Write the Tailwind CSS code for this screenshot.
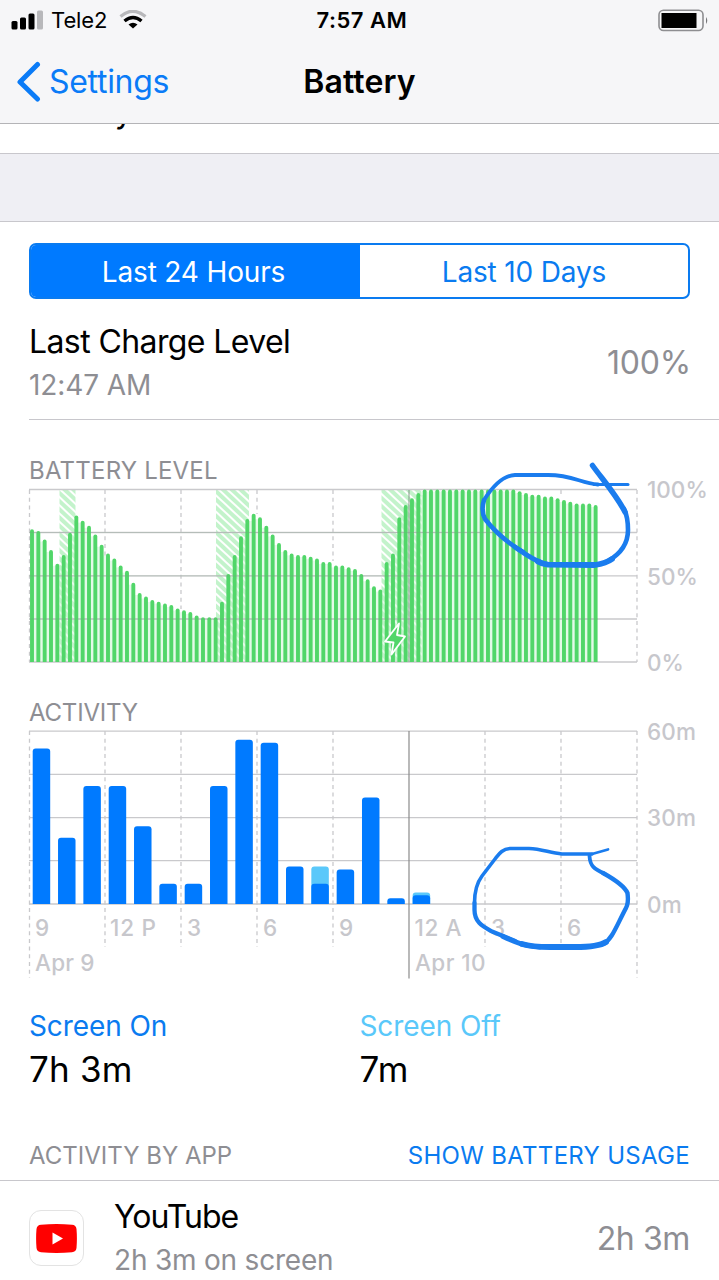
<!DOCTYPE html>
<html lang="en">
<head>
    <meta charset="UTF-8">
    <meta name="viewport" content="width=device-width, initial-scale=1.0">
    <title>Battery</title>
    <script src="https://cdn.jsdelivr.net/npm/@tailwindcss/browser@4"></script>
</head>
<body class="bg-white">
<div class="relative w-[719px] h-[1280px] overflow-hidden bg-white text-black font-['Inter',sans-serif]">

    <!-- Status bar and navigation -->
    <header class="h-[124px] bg-[#f6f6f8] border-b border-[#b4b4b7]">
        <div class="h-10 grid grid-cols-3 items-center pl-[11px] pr-[10px]">
            <div class="flex items-center">
                <svg class="w-8 h-5" viewBox="0 0 32 20">
                    <rect x="0.5" y="11" width="6" height="8.5" rx="1.5"/>
                    <rect x="9" y="7.5" width="6" height="12" rx="1.5"/>
                    <rect x="17.5" y="3.5" width="6" height="16" rx="1.5"/>
                    <rect x="26" y="0.5" width="6" height="19" rx="1.5" fill="#b8b8bb"/>
                </svg>
                <span class="ml-2 text-[22px] tracking-[-0.1px]">Tele2</span>
                <svg class="ml-3 w-7 h-5" viewBox="0 0 28 20" fill="none">
                    <path d="M1.5 6.5 Q13.5 -4 26.5 6.5" stroke="#b8b8bb" stroke-width="3.2"/>
                    <path d="M5.5 11 Q14 4 22.5 11" stroke="#000" stroke-width="3.4"/>
                    <path d="M9.5 14.5 Q14 11 18.5 14.5 L14 18.5 Z" fill="#000"/>
                </svg>
            </div>
            <div class="pl-[4px] text-center text-[22px] font-semibold tracking-[0.5px]">7:57 AM</div>
            <svg class="justify-self-end w-[51px] h-[23px]" viewBox="0 0 51 23" fill="none">
                <rect x="1" y="1.2" width="44" height="20.3" rx="4.5" stroke="#8e8e91" stroke-width="1.6"/>
                <rect x="3.5" y="4" width="35" height="15" fill="#000"/>
                <path d="M48 8 Q50.5 11.5 48 15 Z" fill="#77777a"/>
            </svg>
        </div>
        <div class="h-[83px] grid grid-cols-3 items-center pl-4 pr-4">
            <a href="#" class="flex items-center text-[#0a7bf7]">
                <svg class="w-[25px] h-[42px]" viewBox="0 0 25 42" fill="none" stroke="currentColor" stroke-width="5" stroke-linecap="round" stroke-linejoin="round">
                    <path d="M21.5 3.5 L4 21 L21.5 38"/>
                </svg>
                <span class="ml-2 text-[32px] tracking-[-0.3px]">Settings</span>
            </a>
            <h1 class="text-center text-[32px] font-semibold tracking-[0.1px]">Battery</h1>
        </div>
    </header>

    <!-- Row scrolled under the navigation bar -->
    <div class="h-[29px] overflow-hidden pl-[29px]">
        <div class="-mt-[34px] text-[32px] leading-[44px] tracking-[-0.7px]">Battery Health</div>
    </div>
    <div class="h-[69px] bg-[#efeff4] border-y border-[#c8c7cc]"></div>

    <!-- Segmented control -->
    <div class="mt-[21px] mx-[29px] h-14 flex rounded-[7px] border-2 border-[#0a7bf0] overflow-hidden text-[28px] tracking-[-0.15px]">
        <div class="w-[329px] pt-[2px] pr-[4px] flex items-center justify-center bg-[#007aff] text-white">Last 24 Hours</div>
        <div class="flex-1 pt-[2px] flex items-center justify-center text-[#0a7bf0]">Last 10 Days</div>
    </div>

    <!-- Last charge -->
    <div class="ml-[29px] pr-[28px] h-[121px] flex justify-between items-center border-b border-[#c8c7cc]">
        <div class="pt-[8px]">
            <div class="text-[32px] leading-[44px] tracking-[-0.6px]">Last Charge Level</div>
            <div class="text-[28px] leading-[42px] tracking-[-0.1px] text-[#8e8e93]">12:47 AM</div>
        </div>
        <div class="pt-2 text-[32px] text-[#8e8e93] tracking-[-0.2px]">100%</div>
    </div>

    <!-- Battery level -->
    <h2 class="mt-[35px] ml-[29px] h-[31px] leading-8 text-[24px] tracking-[0.2px] text-[#8e8e93]">BATTERY LEVEL</h2>
    <svg class="block w-[719px] h-[194px] overflow-visible" viewBox="0 486 719 194">
        <defs>
            <pattern id="hatch" width="6" height="6" patternUnits="userSpaceOnUse" patternTransform="rotate(43)">
                <rect width="6" height="4" fill="#c3f3cb"/>
            </pattern>
        </defs>
        <g id="levelFill"></g>
        <g fill="url(#hatch)">
            <rect x="59.5" y="490" width="16" height="172"/>
            <rect x="216" y="490" width="33" height="172"/>
            <rect x="381.5" y="490" width="40" height="172"/>
        </g>
        <g stroke="#c9c9cc" stroke-width="1.3">
            <path d="M29 489.5H637 M29 532.5H637 M29 575.8H637 M29 619H637 M29 662H637"/>
        </g>
        <path id="levelDashes" stroke="#c9c9cc" stroke-width="1.3" stroke-dasharray="4 3.7" d="M29.5 490V662 M105 490V556 M181 490V609 M257 490V514 M333 490V561 M561 490V494 M637 490V662"/>
        <g id="levelBars" fill="#51d669"></g>
        <path d="M29 532.5H598 M29 575.8H598 M29 619H598" stroke="#7a9a80" stroke-opacity="0.25" stroke-width="1.2"/>
        <path d="M409 490V662" stroke="#7b8b7d" stroke-opacity="0.8" stroke-width="1.1"/>
        <path d="M399 623.5 L385 641.5 L393.5 642.5 L391.5 654.5 L405 636.5 L397 635 Z" fill="#51d669" stroke="#fff" stroke-width="1.8" stroke-linejoin="round"/>
        <g font-size="22.5" font-weight="500" fill="#c7c7cc">
            <text x="647" y="498">100%</text>
            <text x="647" y="584.5">50%</text>
            <text x="647" y="670.5">0%</text>
        </g>
    </svg>

    <!-- Activity -->
    <h2 class="mt-[17px] ml-[29px] h-[31px] leading-8 text-[24px] tracking-[-0.2px] text-[#8e8e93]">ACTIVITY</h2>
    <svg class="block w-[719px] h-[254px] overflow-visible" viewBox="0 728 719 254">
        <g stroke="#c9c9cc" stroke-width="1.3">
            <path d="M29 731.2H637 M29 774.4H637 M29 817.6H637 M29 860.7H637 M29 904H637"/>
            <path stroke-dasharray="4 3.7" d="M29.5 731V978 M105 731V947 M181 731V947 M257 731V947 M333 731V947 M485 731V947 M561 731V947 M637 731V978"/>
        </g>
        <path d="M409 731V978.5" stroke="#8b8b8b" stroke-width="1.2"/>
        <g id="activityBars"></g>
        <g font-size="22.5" font-weight="500" fill="#c7c7cc" letter-spacing="0.2">
            <text x="647" y="740">60m</text>
            <text x="647" y="826">30m</text>
            <text x="647" y="912.5">0m</text>
            <text x="35" y="936">9</text>
            <text x="110" y="936" letter-spacing="0.8">12 P</text>
            <text x="187" y="936">3</text>
            <text x="263" y="936">6</text>
            <text x="339" y="936">9</text>
            <text x="414.500" y="936" letter-spacing="0.6">12 A</text>
            <text x="491" y="936">3</text>
            <text x="567" y="936">6</text>
            <text x="35" y="971">Apr 9</text>
            <text x="415" y="971" letter-spacing="0.4">Apr 10</text>
        </g>
    </svg>

    <!-- Totals -->
    <div class="mt-[26px] mx-[29px] grid grid-cols-2">
        <div>
            <div class="text-[28px] leading-9 tracking-[-0.1px] text-[#0a7bf0]">Screen On</div>
            <div class="text-[35px] leading-[50px] tracking-[0.2px]">7h 3m</div>
        </div>
        <div>
            <div class="text-[28px] leading-9 tracking-[-0.1px] text-[#5ac8fa]">Screen Off</div>
            <div class="text-[35px] leading-[50px] tracking-[0.2px]">7m</div>
        </div>
    </div>

    <!-- Activity by app -->
    <div class="mt-[36px] px-[29px] pt-[2px] h-[51px] flex justify-between items-center border-b border-[#c8c7cc] text-[24px]">
        <h2 class="text-[#8e8e93]">ACTIVITY BY APP</h2>
        <a href="#" class="tracking-[0.3px] text-[#0a7bf0]">SHOW BATTERY USAGE</a>
    </div>
    <div class="h-[114px] px-[29px] flex items-center">
        <div class="w-[55px] h-14 flex items-center justify-center rounded-[12px] border border-[#e3e3e3]">
            <svg class="w-[41px] h-[29px]" viewBox="0 0 41 29">
                <path d="M5 .8 Q20.500 -.6 36 .8 Q40 1 40.500 5 Q41.300 14.500 40.500 24 Q40 28 36 28.200 Q20.500 29.600 5 28.200 Q1 28 .5 24 Q-.3 14.500 .5 5 Q1 1 5 .8Z" fill="#f00"/>
                <path d="M16.500 8.500 L27 14.500 L16.500 20.500Z" fill="#fff"/>
            </svg>
        </div>
        <div class="ml-[30px] flex-1">
            <div class="text-[32px] leading-[44px] tracking-[-1px]">YouTube</div>
            <div class="text-[28px] leading-[42px] tracking-[-0.2px] text-[#8e8e93]">2h 3m on screen</div>
        </div>
        <div class="pt-[2px] text-[32px] tracking-[-0.4px] text-[#8e8e93]">2h 3m</div>
    </div>

    <!-- Pen marks -->
    <svg class="absolute inset-0 w-[719px] h-[1280px]" viewBox="0 0 719 1280" fill="none" stroke="#1a7cee" stroke-linecap="round" stroke-linejoin="round">
        <path stroke-width="3" d="M628 484.500 H594"/>
        <path stroke-width="3.800" d="M598 484.500 C580 483 573 475 548 475 H515 C502 475.500 491 489 484 500"/>
        <path stroke-width="4.600" d="M484 500 C481.500 508 483 515 485 519 C495 532 508 543 523 552"/>
        <path stroke-width="5" d="M515 547 C525 554 534 561 546 564.300"/>
        <path stroke-width="5.800" d="M538 561.500 Q542 564 548 564.700 L595 565 C602 564 608 562 612 559"/>
        <path stroke-width="4.600" d="M608 561 C622 553 628 543 628 530 C628 521 627 515 624 509"/>
        <path stroke-width="5.500" d="M592.500 465.500 C603 480 617 496 625 512"/>
        <path stroke-width="2.800" d="M608 849.500 L592 854"/>
        <path stroke-width="3.600" d="M592 854 H562 C550 853 542 849 529 848.500 H510 C502 849 499 854 495 859 L482 876 C476 884 474.500 892 474.500 903"/>
        <path stroke-width="4.300" d="M474.500 903 V910 C474.500 923 484 927 492 931.500 L515 941"/>
        <path stroke-width="5" d="M503 936.500 C517 943 525 946 540 947"/>
        <path stroke-width="5.800" d="M522 944 C530 946.500 538 947 550 947 H575 C590 947 600 946 606 942"/>
        <path stroke-width="4.400" d="M604 943.500 C612 939 616 927 626 908 C629 902 628 899 627.500 893 C624 885 612 878 603 873"/>
        <path stroke-width="3.800" d="M605 874 C594 869 590 866 589.500 856"/>
    </svg>
</div>

<script>
    // Battery percentage, one sample every 15 minutes
    const levels = [
        77, 76, 71, 65, 57, 62, 75, 85, 82, 79, 74, 68, 63, 60, 56, 53, 46, 40, 38, 36,
        35, 34, 33, 31, 30, 29, 27, 26, 26, 26, 35, 51, 62, 73, 83, 86, 84, 79, 74, 69,
        65, 63, 62, 62, 61, 60, 58, 58, 56, 56, 55, 54, 51, 48, 44, 42, 58, 63, 84, 91,
        95, 98, 100, 100, 100, 100, 100, 100, 100, 100, 100, 100, 100, 100, 100, 100, 100,
        99, 98, 97, 97, 96, 96, 95, 94, 93, 92, 92, 92, 91
    ];
    let fill = '', bars = '';
    levels.forEach((v, i) => {
        const x = 30.05 + i * 6.333;
        const h = v * 1.724;
        const y = 662 - h;
        if (i < levels.length - 1) {
            const g = Math.min(v, levels[i + 1]) * 1.724 - 2;
            fill += `<rect x="${x + 3}" y="${662 - g}" width="4.2" height="${g}" fill="#e4faE8"/>`;
        }
        bars += `<path d="M${x} 662V${y + 2}a1.95 2 0 0 1 3.9 0V662z"/>`;
    });
    document.getElementById('levelFill').innerHTML = fill;
    document.getElementById('levelBars').innerHTML = bars;

    // Minutes per hour: [screen on, total]
    const activity = [
        [54, 54], [23, 23], [41, 41], [41, 41], [27, 27], [7, 7], [7, 7], [41, 41],
        [57, 57], [56, 56], [13, 13], [7, 13], [12, 12], [37, 37], [2, 2], [3, 4]
    ];
    const bar = (x, m, color) => {
        const y = 904 - m * 2.88;
        return `<path fill="${color}" d="M${x} 904V${y + 3}q0 -3 3 -3h11.5q3 0 3 3V904z"/>`;
    };
    document.getElementById('activityBars').innerHTML = activity.map(([on, total], i) => {
        const x = 32.7 + i * 25.33;
        return (total > on ? bar(x, total, '#5ac8fa') : '') + bar(x, on, '#007aff');
    }).join('');
</script>
</body>
</html>
